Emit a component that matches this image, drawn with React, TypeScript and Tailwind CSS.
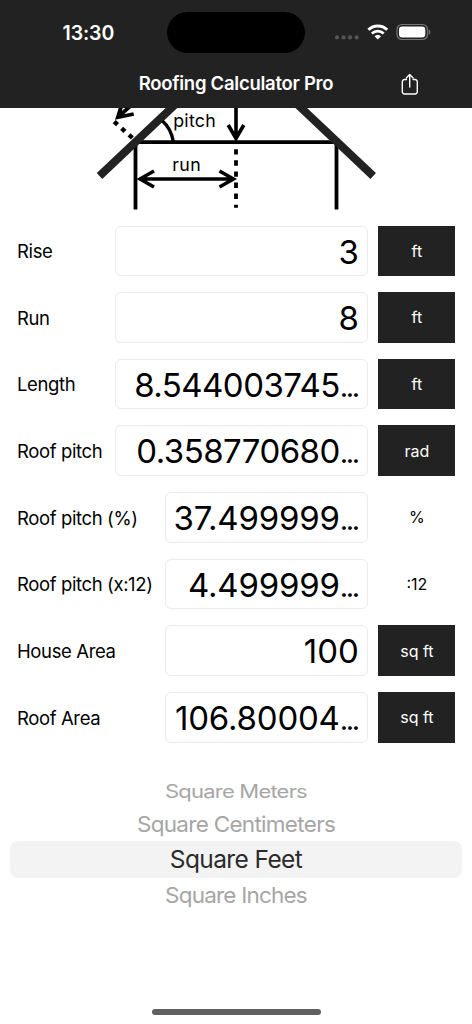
import { useState } from "react";
import clsx from "clsx";

interface CalcRow {
  label: string;
  value: string;
  truncated?: boolean;
  unit: string;
  fixedUnit?: boolean;
  narrow?: boolean;
}

const ROWS: CalcRow[] = [
  { label: "Rise", value: "3", unit: "ft" },
  { label: "Run", value: "8", unit: "ft" },
  { label: "Length", value: "8.544003745", truncated: true, unit: "ft" },
  { label: "Roof pitch", value: "0.358770680", truncated: true, unit: "rad" },
  { label: "Roof pitch (%)", value: "37.499999", truncated: true, unit: "%", fixedUnit: true, narrow: true },
  { label: "Roof pitch (x:12)", value: "4.499999", truncated: true, unit: ":12", fixedUnit: true, narrow: true },
  { label: "House Area", value: "100", unit: "sq ft", narrow: true },
  { label: "Roof Area", value: "106.80004", truncated: true, unit: "sq ft", narrow: true },
];

// Each option gets its own size so the list looks like it sits on a wheel
const OPTIONS = [
  { name: "Square Meters", className: "h-[30px] text-[22px] tracking-[-0.8px] scale-y-[0.82]" },
  { name: "Square Centimeters", className: "h-[35px] text-[22.5px] tracking-[-0.7px] scale-y-[0.98]" },
  { name: "Square Feet", className: "h-[37px] text-[24.5px] tracking-[-0.6px]" },
  { name: "Square Inches", className: "h-[34px] text-[22.5px] tracking-[-0.8px] scale-y-[0.98]" },
];

function StatusBar() {
  return (
    <div className="flex h-[65px] items-center">
      <div className="w-[167px] pl-[62.5px] text-[19.5px] leading-6 font-semibold tracking-[-0.1px]">13:30</div>
      <div className="h-[41px] w-[138px] rounded-full bg-black" />
      <svg width="100" height="24" viewBox="333 21 100 24" className="ml-[28px]" fill="none">
        <g fill="#555">
          <circle cx="337" cy="37.4" r="2.1" />
          <circle cx="343.5" cy="37.4" r="2.1" />
          <circle cx="350" cy="37.4" r="2.1" />
          <circle cx="356.7" cy="37.4" r="2.1" />
        </g>
        <path d="M368.4 29.8a13.3 13.3 0 0 1 18.8 0" stroke="#fff" strokeWidth="3" />
        <path d="M371.9 33.6a8.4 8.4 0 0 1 11.8 0" stroke="#fff" strokeWidth="2.8" />
        <path d="M377.8 39.6l-3.3-3.3a4.8 4.8 0 0 1 6.6 0z" fill="#fff" />
        <rect x="397" y="24.5" width="30.5" height="15" rx="5" stroke="#777" strokeWidth="1.2" />
        <rect x="399" y="26.4" width="26.3" height="11.2" rx="3.3" fill="#fff" />
        <path d="M429 29.5c1.8.6 1.8 4.4 0 5z" fill="#777" />
      </svg>
    </div>
  );
}

function ShareIcon() {
  return (
    <svg
      width="20"
      height="24"
      viewBox="400 72 20 24"
      fill="none"
      stroke="#fff"
      strokeWidth="1.4"
      strokeLinecap="round"
      strokeLinejoin="round"
    >
      <path d="M406.5 79.5h-2a2.2 2.2 0 0 0-2.2 2.2v10.1a2.2 2.2 0 0 0 2.2 2.2h10.6a2.2 2.2 0 0 0 2.2-2.2v-10.1a2.2 2.2 0 0 0-2.2-2.2h-2" />
      <path d="M409.7 87V74.8M406.3 78l3.4-3.4 3.4 3.4" />
    </svg>
  );
}

function RoofDiagram() {
  return (
    <svg width="472" height="118" viewBox="0 107.5 472 118" className="block" fill="none" stroke="#000" strokeWidth="3.8">
      {/* house frame */}
      <path d="M135.5 209V141.7H336.5V209" />
      <path d="M99.5 175.5L176 103.2M373.2 175.5L296.7 103.2" stroke="#222" strokeWidth="8" />
      {/* length arrow */}
      <path d="M130.5 105.5L119 115.5M121.5 105L117.8 116.8L133.7 113.5" strokeWidth="3.8" />
      <path d="M114.2 121.2l3.4 3M121.6 127.8l3.4 3M129 134.4l3.4 3" strokeWidth="4.4" />
      {/* pitch angle */}
      <path d="M162.5 120.5Q171 128 173.3 141" strokeWidth="3.4" />
      {/* rise arrow */}
      <path d="M236 105v33M228.2 124.5l7.8 13.5 7.8-13.5" strokeWidth="3.6" />
      <path d="M236 148.7V207.3" strokeWidth="3.8" strokeDasharray="5.4 5.7" />
      {/* run arrow */}
      <path d="M140 178.5h94M154 170.5l-14 8 14 8M219.5 170.5l14 8-14 8" strokeWidth="3.5" />
      <g fill="#000" stroke="none" fontFamily="Inter, sans-serif" fontSize="17.8">
        <text x="173.2" y="126.5" textLength="42.5">pitch</text>
        <text x="172.2" y="170.3" textLength="28.5">run</text>
      </g>
    </svg>
  );
}

function Row({ row }: { row: CalcRow }) {
  return (
    <div className="flex h-[50.67px] items-center">
      <div
        className={clsx(
          "pt-[2px] text-[18.5px] tracking-[-0.38px] whitespace-nowrap",
          row.narrow ? "w-[147.5px]" : "w-[98px]"
        )}
      >
        {row.label}
      </div>
      <div className="h-full flex-1 rounded-[6px] border border-[#ebebeb] pr-[8px] text-right text-[33px] leading-[50px] whitespace-nowrap">
        <span className={clsx(row.truncated && (row.narrow ? "tracking-[-0.2px]" : "tracking-[-0.55px]"))}>
          {row.value}
        </span>
        {row.truncated && <span className="mr-px text-[29px] leading-none tracking-[-2.3px]">...</span>}
      </div>
      {row.fixedUnit ? (
        <div className="ml-[10.5px] w-[77px] text-center text-[16px]">{row.unit}</div>
      ) : (
        <button className="ml-[10.5px] h-full w-[77px] bg-[#222] text-center text-[16px] text-white">
          {row.unit}
        </button>
      )}
    </div>
  );
}

export default function App() {
  const [selected, setSelected] = useState("Square Feet");

  return (
    <div className="flex h-[1024px] w-[472px] flex-col overflow-hidden bg-white font-[Inter,sans-serif] text-black">
      <header className="h-[107.5px] shrink-0 bg-[#222] text-white">
        <StatusBar />
        <div className="flex h-[38px] items-center">
          <div className="w-[72px]" />
          <h1 className="flex-1 text-center text-[18.5px] font-semibold tracking-[-0.27px]">Roofing Calculator Pro</h1>
          <button className="flex w-[72px]">
            <ShareIcon />
          </button>
        </div>
      </header>

      <RoofDiagram />

      <main className="flex flex-col gap-[16px] pr-[16.6px] pl-[17px]">
        {ROWS.map((row) => (
          <Row key={row.label} row={row} />
        ))}
      </main>

      <div className="mx-[10px] mt-[33px] flex flex-col">
        {OPTIONS.map((option) => (
          <button
            key={option.name}
            onClick={() => setSelected(option.name)}
            className={clsx(
              "flex items-center justify-center rounded-[8px] whitespace-nowrap",
              option.className,
              option.name === selected ? "bg-[#f3f3f3] text-[#2b2b2b]" : "text-[#a6a6a6]"
            )}
          >
            {option.name}
          </button>
        ))}
      </div>

      <div className="mx-auto mt-auto mb-[9px] h-[6px] w-[169px] rounded-full bg-[#606060]" />
    </div>
  );
}
